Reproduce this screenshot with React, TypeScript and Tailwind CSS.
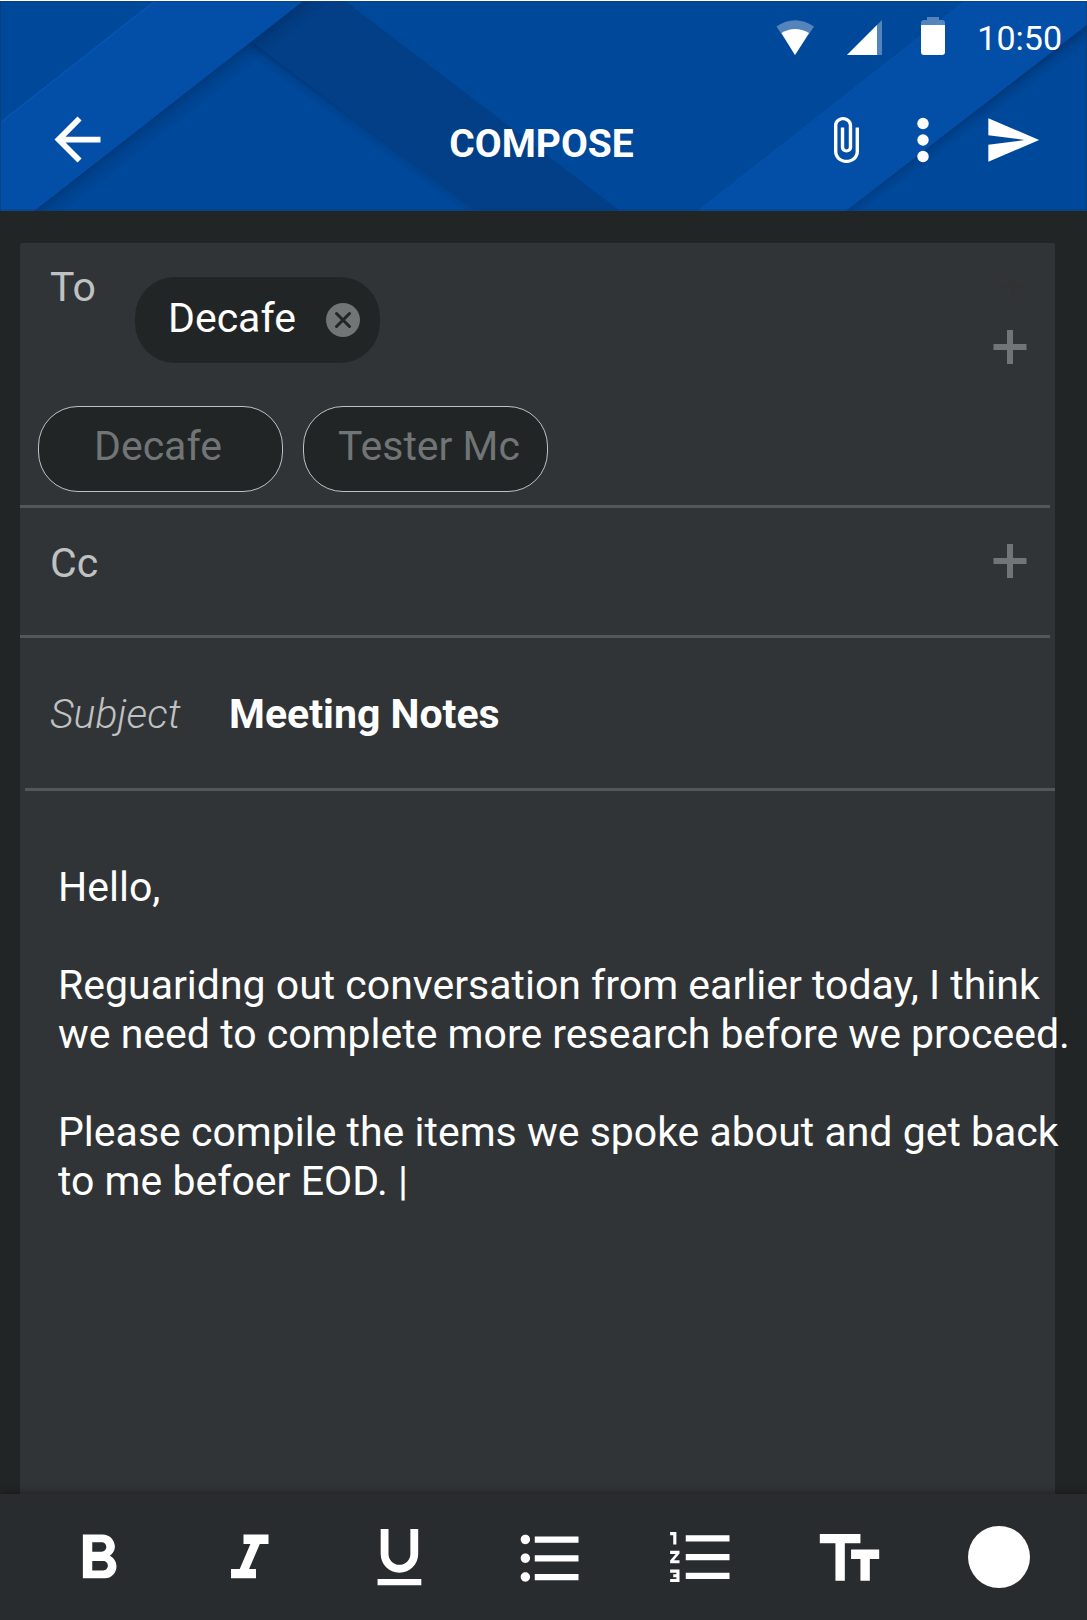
import React from "react";

function HeaderPattern() {
  return (
    <svg
      className="absolute inset-0 h-full w-full"
      viewBox="0 1 1087 210"
      preserveAspectRatio="none"
      aria-hidden="true"
    >
      <defs>
        <linearGradient id="shadeA" gradientUnits="userSpaceOnUse" x1="300" y1="1" x2="314" y2="19">
          <stop offset="0" stopColor="#002a5e" stopOpacity="0.55" />
          <stop offset="0.4" stopColor="#002a5e" stopOpacity="0.22" />
          <stop offset="1" stopColor="#002a5e" stopOpacity="0" />
        </linearGradient>
        <linearGradient id="shadeB" gradientUnits="userSpaceOnUse" x1="252" y1="42" x2="244" y2="53">
          <stop offset="0" stopColor="#002a5e" stopOpacity="0.6" />
          <stop offset="0.4" stopColor="#002a5e" stopOpacity="0.18" />
          <stop offset="1" stopColor="#002a5e" stopOpacity="0" />
        </linearGradient>
        <linearGradient id="shadeC" gradientUnits="userSpaceOnUse" x1="1087" y1="25" x2="1096" y2="37">
          <stop offset="0" stopColor="#002a5e" stopOpacity="0.6" />
          <stop offset="0.4" stopColor="#002a5e" stopOpacity="0.25" />
          <stop offset="1" stopColor="#002a5e" stopOpacity="0" />
        </linearGradient>
      </defs>
      <rect width="1087" height="211" fill="#00489a" />
      <path d="M345 1L620 211H475L252 42L303 1Z" fill="#023f87" />
      <path d="M252 42L475 211H445L238 54Z" fill="url(#shadeB)" />
      <path d="M303 1L34 211H65L333 1Z" fill="url(#shadeA)" />
      <path d="M155 1H303L34 211H0V123Z" fill="#034fa7" />
      <path d="M155 1L0 123" stroke="#0557b2" strokeWidth="1.5" />
      <path d="M965 1H1087V25L846 211H698Z" fill="#034fa7" />
      <path d="M965 1L698 211" stroke="#0454ac" strokeWidth="1" />
      <path d="M1087 25L846 211H870L1087 44Z" fill="url(#shadeC)" />
      <path d="M0 1.5H1087M0.5 1V211M0 210H1087M1086.5 1V211" stroke="#0b3d70" strokeOpacity="0.7" fill="none" />
    </svg>
  );
}

function StatusIcons() {
  return (
    <>
      <svg className="mr-[32px] h-[38px] w-[38px]" viewBox="779 16 38 38" aria-label="Wi-Fi">
        <path d="M779.5 25.5Q798 13 817 25.5L798 54Z" fill="#fff" fillOpacity="0.33" />
        <path d="M784.5 32Q798 24 812 32L798 54Z" fill="#fff" />
      </svg>
      <svg className="mr-[39px] h-[38px] w-[36px]" viewBox="849 16 36 38" aria-label="Signal">
        <path d="M850 54L885 19V54Z" fill="#fff" fillOpacity="0.33" />
        <path d="M850 54L880 24V54Z" fill="#fff" />
      </svg>
      <svg className="mr-[32px] h-[38px] w-[24px]" viewBox="924 16 24 38" aria-label="Battery">
        <path d="M930 16h12v3h3q3 0 3 3v2h-24v-2q0-3 3-3h3z" fill="#fff" fillOpacity="0.33" />
        <path d="M924 24h24v27q0 3-3 3h-18q-3 0-3-3z" fill="#fff" />
      </svg>
    </>
  );
}

const field =
  "min-w-0 flex-1 bg-transparent text-[41px] leading-[49px] text-white outline-none";
const chip =
  "flex h-[86px] w-[245px] items-center rounded-[40px] bg-[#222526] text-[41px] leading-[49px]";

function Plus() {
  return (
    <svg className="h-[34px] w-[34px]" viewBox="0 0 34 34" aria-hidden="true">
      <path d="M17 0V34M0.5 17H33.5" stroke="#717576" strokeWidth="6" />
    </svg>
  );
}

const tools = [
  {
    name: "Bold",
    box: "0 0 24 24",
    d: "M15.6 10.79c.97-.67 1.65-1.77 1.65-2.79 0-2.26-1.75-4-4-4H7v14h7.04c2.09 0 3.71-1.7 3.71-3.79 0-1.52-.86-2.82-2.15-3.42zM10 6.5h3c.83 0 1.5.67 1.5 1.5s-.67 1.5-1.5 1.5h-3v-3zm3.5 9H10v-3h3.5c.83 0 1.5.67 1.5 1.5s-.67 1.5-1.5 1.5z",
  },
  { name: "Italic", box: "-0.4 0 24 24", d: "M10 4v3h2.21l-3.42 8H6v3h8v-3h-2.21l3.42-8H18V4z" },
  {
    name: "Underline",
    box: "-0.3 0.8 24 24",
    d: "M12 17c3.31 0 6-2.69 6-6V3h-2.5v8c0 1.93-1.57 3.5-3.5 3.5S8.5 12.93 8.5 11V3H6v8c0 3.31 2.69 6 6 6zm-7 2v2h14v-2H5z",
  },
  {
    name: "Bulleted list",
    box: "-0.6 0.4 24 24",
    d: "M4 10.5c-.83 0-1.5.67-1.5 1.5s.67 1.5 1.5 1.5 1.5-.67 1.5-1.5-.67-1.5-1.5-1.5zm0-6c-.83 0-1.5.67-1.5 1.5S3.17 7.5 4 7.5 5.5 6.83 5.5 6 4.83 4.5 4 4.5zm0 12c-.83 0-1.5.68-1.5 1.5s.68 1.5 1.5 1.5 1.5-.68 1.5-1.5-.67-1.5-1.5-1.5zM7 19h14v-2H7v2zm0-6h14v-2H7v2zm0-8v2h14V5H7z",
  },
  {
    name: "Numbered list",
    box: "-0.6 0.8 24 24",
    d: "M2 17h2v.5H3v1h1v.5H2v1h3v-4H2v1zm1-9h1V4H2v1h1v3zm-1 3h1.8L2 13.1v.9h3v-1H3.2L5 10.9V10H2v1zm5-6v2h14V5H7zm0 14h14v-2H7v2zm0-6h14v-2H7v2z",
  },
  { name: "Text size", box: "0 0.2 24 24", d: "M2.5 4v3h5v12h3V7h5V4h-13zm19 5h-9v3h3v7h3v-7h3V9z" },
];

const message = `Hello,

Reguaridng out conversation from earlier today, I think
we need to complete more research before we proceed.

Please compile the items we spoke about and get back
to me befoer EOD. |`;

export default function App() {
  return (
    <div className="flex min-h-screen flex-col bg-[#222526] font-['Roboto',sans-serif] text-white">
      <header className="relative border-t border-white">
        <HeaderPattern />
        <div className="relative flex items-start justify-end pt-[16px] pr-[25px]">
          <StatusIcons />
          <time className="text-[34px] leading-[42px]">10:50</time>
        </div>
        <div className="relative grid h-[152px] grid-cols-[1fr_auto_1fr] items-start pt-[46px] pr-[47px] pl-[43px]">
          <button type="button" aria-label="Back" className="h-[69px] w-[69px]">
            <svg className="h-[69px] w-[69px]" viewBox="0 0 24 24" fill="currentColor" aria-hidden="true">
              <path d="M20 11H7.83l5.59-5.59L12 4l-8 8 8 8 1.41-1.41L7.83 13H20v-2z" />
            </svg>
          </button>
          <h1 className="mt-[17px] text-[39px] leading-[44px] font-bold">COMPOSE</h1>
          <div className="mt-[12px] flex items-center justify-end">
            <button type="button" aria-label="Attach file" className="mr-[58px]">
              <svg className="h-[46px] w-[25px]" viewBox="7 1 11 22" preserveAspectRatio="none" fill="currentColor" aria-hidden="true">
                <path d="M16.5 6v11.5c0 2.21-1.79 4-4 4s-4-1.79-4-4V5c0-1.38 1.12-2.5 2.5-2.5s2.5 1.12 2.5 2.5v10.5c0 .55-.45 1-1 1s-1-.45-1-1V6H10v9.5c0 1.38 1.12 2.5 2.5 2.5s2.5-1.12 2.5-2.5V5c0-2.21-1.79-4-4-4S7 2.79 7 5v12.5c0 3.04 2.46 5.5 5.5 5.5s5.5-2.46 5.5-5.5V6h-1.5z" />
              </svg>
            </button>
            <button type="button" aria-label="More options" className="mr-[58px]">
              <svg className="h-[46px] w-[12px]" viewBox="0 0 12 46" fill="currentColor" aria-hidden="true">
                <circle cx="6" cy="6.5" r="5.7" />
                <circle cx="6" cy="23" r="5.7" />
                <circle cx="6" cy="39.5" r="5.7" />
              </svg>
            </button>
            <button type="button" aria-label="Send">
              <svg className="h-[46px] w-[53px]" viewBox="1.5 2.5 21.8 19" fill="currentColor" aria-hidden="true">
                <path d="M2.01 21L23 12 2.01 3 2 10l15 2-15 2z" />
              </svg>
            </button>
          </div>
        </div>
      </header>

      <main className="mt-[32px] mr-[32px] ml-[20px] flex flex-1 flex-col rounded-t-[2px] bg-[#313436]">
        <section className="mr-[5px] flex justify-between border-b-[3px] border-[#53575a] pb-[13px]" aria-label="To">
          <div>
            <div className="flex pl-[30px]">
              <span className="mt-[20px] w-[85px] text-[41px] leading-[49px] text-[#bfc1c2]">To</span>
              <div className={chip + " mt-[34px] justify-between pr-[20px] pb-[3px] pl-[33px]"}>
                <span>Decafe</span>
                <button type="button" aria-label="Remove Decafe" className="mt-[3px]">
                  <svg className="h-[34px] w-[34px]" viewBox="0 0 34 34" aria-hidden="true">
                    <circle cx="17" cy="17" r="17" fill="#717576" />
                    <path d="M10.5 10.5l13 13M23.5 10.5l-13 13" stroke="#222526" strokeWidth="3" strokeLinecap="round" />
                  </svg>
                </button>
              </div>
            </div>
            <div className="mt-[43px] flex gap-[20px] pl-[18px]">
              <button type="button" className={chip + " border border-[#bfc1c2] pb-[5px] pl-[55px] text-[#717576]"}>
                Decafe
              </button>
              <button type="button" className={chip + " border border-[#bfc1c2] pb-[5px] pl-[34px] text-[#717576]"}>
                Tester Mc
              </button>
            </div>
          </div>
          <div className="flex flex-col items-end pt-[33px] pr-[23px]">
            <svg className="mr-[4px] h-[20px] w-[20px]" viewBox="0 0 20 20" aria-hidden="true">
              <path d="M10 0V20M0 10H20" stroke="#333232" strokeWidth="4" />
            </svg>
            <button type="button" aria-label="Add recipient" className="mt-[34px]">
              <Plus />
            </button>
          </div>
        </section>

        <section className="mr-[5px] flex h-[130px] items-start border-b-[3px] border-[#53575a] pt-[31px] pr-[23px] pl-[30px]">
          <label htmlFor="cc" className="w-[85px] text-[41px] leading-[49px] text-[#bfc1c2]">
            Cc
          </label>
          <input id="cc" className={field} />
          <button type="button" aria-label="Add Cc recipient" className="mt-[5px]">
            <Plus />
          </button>
        </section>

        <section className="ml-[5px] flex h-[153px] items-start border-b-[3px] border-[#53575a] pt-[52px] pl-[25px]">
          <label htmlFor="subject" className="w-[179px] text-[41px] leading-[49px] font-light text-[#bfc1c2] italic">
            Subject
          </label>
          <input id="subject" className={field + " font-bold"} defaultValue="Meeting Notes" />
        </section>

        <textarea
          aria-label="Message"
          className="mt-[72px] -mr-[32px] ml-[38px] block flex-1 resize-none overflow-hidden bg-transparent text-[41px] leading-[49px] whitespace-pre text-white outline-none"
          rows={8}
          defaultValue={message}
        />
      </main>

      <div
        role="toolbar"
        aria-label="Formatting"
        className="relative flex h-[126px] items-start justify-between bg-[#292c2e] pt-[28px] pr-[50px] pl-[61px] shadow-[0_-1px_8px_rgba(0,0,0,0.4)]"
      >
        {tools.map((t) => (
          <button key={t.name} type="button" aria-label={t.name} className="h-[75px] w-[75px]">
            <svg className="h-[75px] w-[75px]" viewBox={t.box} fill="currentColor" aria-hidden="true">
              <path d={t.d} />
            </svg>
          </button>
        ))}
        <button type="button" aria-label="Text color" className="flex h-[75px] w-[75px] justify-center pt-[4px]">
          <span className="h-[62px] w-[62px] rounded-full bg-white" />
        </button>
      </div>
    </div>
  );
}
